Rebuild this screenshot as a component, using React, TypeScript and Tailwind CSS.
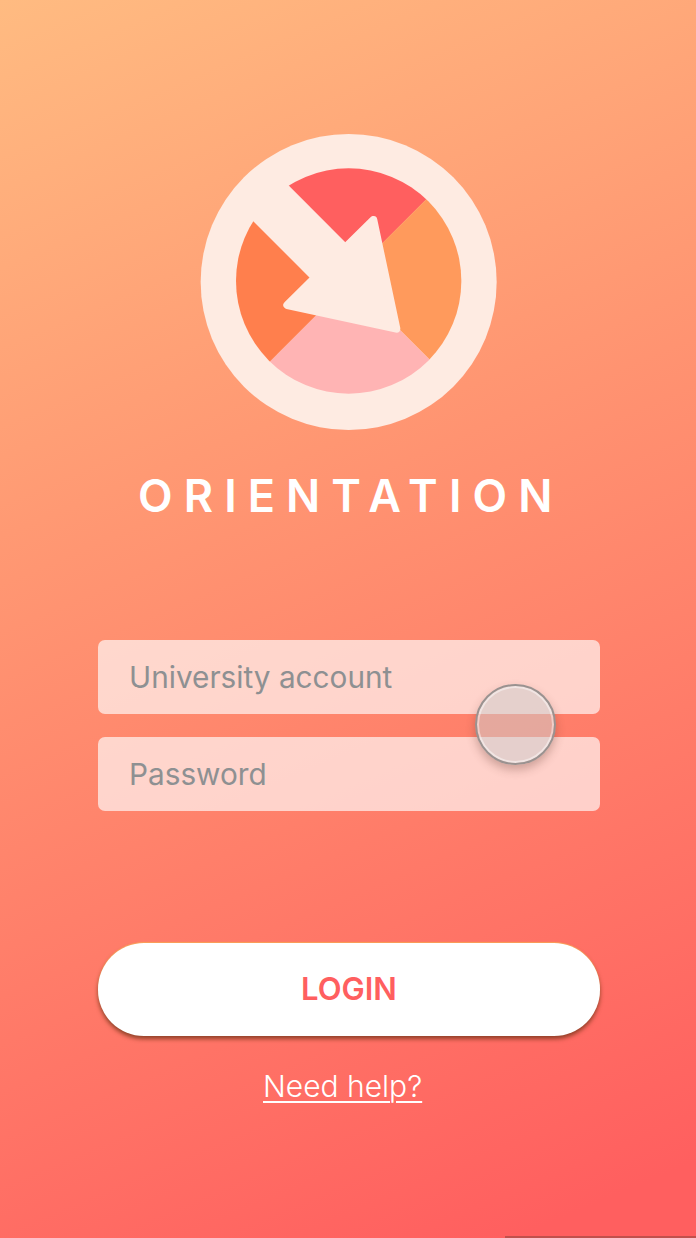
export default function App() {
  return (
    <div className="relative flex h-[1238px] w-[696px] flex-col overflow-hidden bg-[linear-gradient(157deg,#ffbb81_0%,#ff9973_35%,#ff5f5f_95%)] pt-[124px] font-['Inter',sans-serif]">
      <svg viewBox="0 0 960 960" className="ml-[190px] h-[320px] w-[320px] shrink-0">
        <defs>
          <clipPath id="inner">
            <circle cx="476" cy="471" r="338" />
          </clipPath>
        </defs>
        <circle cx="476" cy="474" r="444" fill="#feebe2" />
        <g clipPath="url(#inner)">
          <polygon points="186,74 523,412 853,82" fill="#ff5f5f" />
          <polygon points="853,82 473,461 900,888 1000,500" fill="#ff9a5c" />
          <polygon points="100,853 482,470 900,888 500,1000" fill="#ffb4b4" />
          <polygon points="88,190 425,527 100,853 0,500" fill="#ff7f4d" />
        </g>
        <polygon points="550,288 292,543 619,614" fill="#feebe2" stroke="#feebe2" strokeWidth="24" strokeLinejoin="round" />
      </svg>
      <h1 className="mt-[25px] ml-[138px] text-[45px] leading-[53px] font-semibold tracking-[11.1px] text-white">ORIENTATION</h1>
      <div className="mt-[118px] ml-[98px] flex w-[502px] flex-col gap-[23px]">
        <div className="flex h-[74px] items-center rounded-[7px] bg-white/65 pl-[31px] text-[29.75px] text-[#8e9092]">University account</div>
        <div className="flex h-[74px] items-center rounded-[7px] bg-white/65 pl-[31px] text-[29.75px] text-[#8e9092]">Password</div>
      </div>
      <button className="mt-[132px] ml-[98px] flex h-[93px] w-[502px] items-center justify-center rounded-[46px] bg-white text-[31px] font-semibold text-[#ff5f5f] shadow-[0_3px_4px_rgba(110,50,20,0.75),0_-1px_1px_rgba(255,180,90,0.8)]">
        LOGIN
      </button>
      <a className="mt-[30px] ml-[263px] self-start text-[30px] leading-[40px] font-light text-white underline decoration-2 underline-offset-[4px]">Need help?</a>
      <div className="absolute top-[684px] left-[475px] h-[81px] w-[81px] rounded-full border-[2.5px] border-[#9a9290] bg-[rgba(205,205,205,0.52)] shadow-[0_5px_10px_rgba(90,50,40,0.3),inset_0_0_0_2px_rgba(255,255,255,0.45)]" />
      <div className="absolute bottom-0 left-[505px] h-[2px] w-[191px] bg-[#c0504c]" />
    </div>
  );
}
